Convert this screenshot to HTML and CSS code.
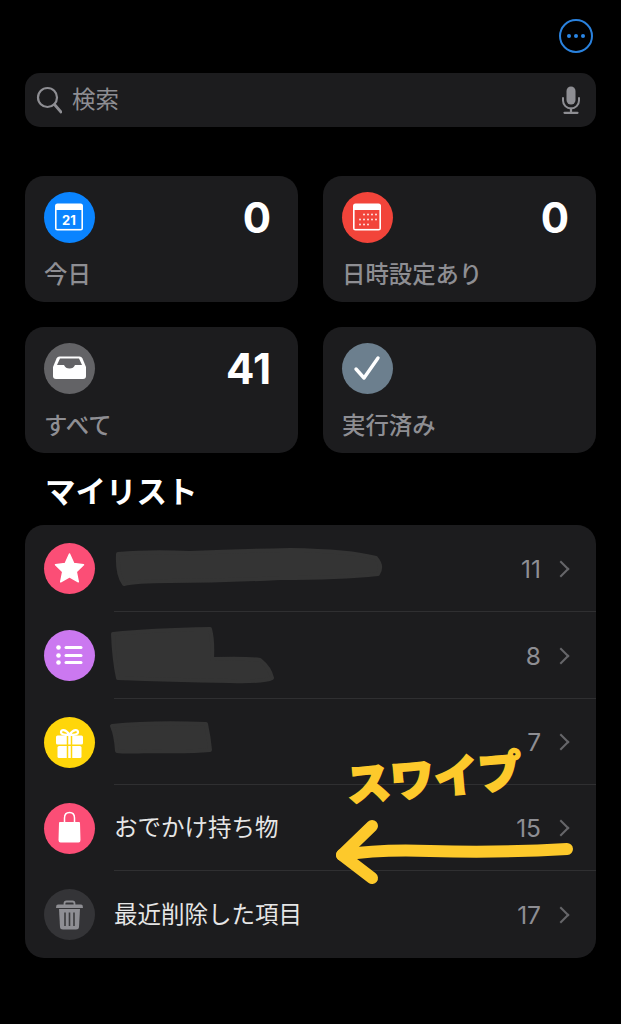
FILE: index.html
```html
<!DOCTYPE html>
<html lang="ja">
<head>
<meta charset="utf-8">
<title>リマインダー</title>
<link rel="stylesheet" href="styles.css">
</head>
<body>
<main class="screen">
  <header class="topbar">
    <button class="more" aria-label="その他"><span class="dot"></span><span class="dot"></span><span class="dot"></span></button>
  </header>

  <div class="search">
    <svg class="search-glass" viewBox="0 0 26 28" width="26" height="28"><circle cx="11.5" cy="11.5" r="9.5" fill="none" stroke="#8e8e93" stroke-width="2.2"/><path d="M18.5 18.5 L25 26" stroke="#8e8e93" stroke-width="2.8" stroke-linecap="round"/></svg>
    <span class="search-text">検索</span>
    <svg class="search-mic" viewBox="0 0 20 28" width="20" height="28"><rect x="5.5" y="0.5" width="9" height="18" rx="4.5" fill="#8e8e93"/><path d="M2 12 v2.5 a8 8 0 0 0 16 0 V12" fill="none" stroke="#8e8e93" stroke-width="2" stroke-linecap="round"/><path d="M10 22.5 V26 M3.5 26.8 H16.5" stroke="#8e8e93" stroke-width="2.2" stroke-linecap="round"/></svg>
  </div>

  <section class="cards">
    <article class="card">
      <div class="card-top">
        <span class="icon blue">
          <svg viewBox="0 0 51 51" width="51" height="51"><rect x="11" y="11.5" width="28" height="27" rx="2.5" fill="#fff"/><rect x="12.6" y="18" width="24.8" height="18.9" fill="#0a84ff"/><text class="cal-num" x="25" y="32.500" text-anchor="middle">21</text></svg>
        </span>
        <span class="card-count">0</span>
      </div>
      <div class="card-label">今日</div>
    </article>
    <article class="card">
      <div class="card-top">
        <span class="icon red">
          <svg viewBox="0 0 51 51" width="51" height="51"><rect x="11" y="11.5" width="28" height="27" rx="2.5" fill="#fff"/><rect x="12.6" y="18" width="24.8" height="18.9" fill="#f2443a"/><g fill="#fff" opacity="0.85"><circle cx="22" cy="22.500" r="1"/><circle cx="26" cy="22.500" r="1"/><circle cx="30" cy="22.500" r="1"/><circle cx="34" cy="22.500" r="1"/><circle cx="18" cy="27.500" r="1"/><circle cx="22" cy="27.500" r="1"/><circle cx="26" cy="27.500" r="1"/><circle cx="30" cy="27.500" r="1"/><circle cx="34" cy="27.500" r="1"/><circle cx="18" cy="32.500" r="1"/><circle cx="22" cy="32.500" r="1"/><circle cx="26" cy="32.500" r="1"/></g></svg>
        </span>
        <span class="card-count">0</span>
      </div>
      <div class="card-label">日時設定あり</div>
    </article>
    <article class="card">
      <div class="card-top">
        <span class="icon grey">
          <svg viewBox="0 0 51 51" width="51" height="51"><path d="M15.500 13.500 H35.500 Q37.500 13.500 38.500 15.500 L42 24 V33 Q42 36 39 36 H12 Q9 36 9 33 V24 L12.500 15.500 Q13.500 13.500 15.500 13.500 Z" fill="#fff"/><path d="M16 15.500 H35 L38 22 H31 Q29.500 25.500 25.500 25.500 Q21.500 25.500 20 22 H13 Z" fill="#636366"/></svg>
        </span>
        <span class="card-count">41</span>
      </div>
      <div class="card-label">すべて</div>
    </article>
    <article class="card">
      <div class="card-top">
        <span class="icon slate">
          <svg viewBox="0 0 51 51" width="51" height="51"><path d="M14 26 L22 35 L36 15" fill="none" stroke="#fff" stroke-width="3.400" stroke-linecap="round" stroke-linejoin="round"/></svg>
        </span>
      </div>
      <div class="card-label">実行済み</div>
    </article>
  </section>

  <h2 class="section-title">マイリスト</h2>

  <section class="list">
    <div class="row">
      <span class="icon pink">
        <svg viewBox="0 0 51 51" width="51" height="51"><path d="M25.500 11 L29.800 20.600 L39.500 21.800 L32.300 28.800 L34.300 38.800 L25.500 33.800 L16.700 38.800 L18.700 28.800 L11.500 21.800 L21.200 20.600 Z" fill="#fff" stroke="#fff" stroke-width="1.500" stroke-linejoin="round"/></svg>
      </span>
      <div class="row-body"><span class="row-name"></span><span class="row-count">11</span><span class="chev"></span></div>
    </div>
    <div class="row">
      <span class="icon purple">
        <svg viewBox="0 0 51 51" width="51" height="51"><g fill="#fff"><circle cx="14.500" cy="17.500" r="2.300"/><circle cx="14.500" cy="25.500" r="2.300"/><circle cx="14.500" cy="32.500" r="2.300"/><rect x="20.500" y="16" width="18" height="3" rx="1.500"/><rect x="20.500" y="24" width="18" height="3" rx="1.500"/><rect x="20.500" y="31" width="18" height="3" rx="1.500"/></g></svg>
      </span>
      <div class="row-body"><span class="row-name"></span><span class="row-count">8</span><span class="chev"></span></div>
    </div>
    <div class="row">
      <span class="icon yellow">
        <svg viewBox="0 0 51 51" width="51" height="51"><g fill="#fff"><rect x="12" y="18.500" width="27" height="9" rx="1.500"/><rect x="13.500" y="29" width="24" height="12" rx="1.500"/></g><path d="M23.500 18 V41 M27.500 18 V41" stroke="#ffd60a" stroke-width="1.500"/><path d="M25.500 18 C22 12 16.500 12 17 15.500 C17.300 18 22 18 25.500 18 C29 18 33.700 18 34 15.500 C34.500 12 29 12 25.500 18 Z" fill="none" stroke="#fff" stroke-width="2.200"/></svg>
      </span>
      <div class="row-body"><span class="row-name"></span><span class="row-count">7</span><span class="chev"></span></div>
    </div>
    <div class="row">
      <span class="icon pink">
        <svg viewBox="0 0 51 51" width="51" height="51"><path d="M16 19 H35 Q36 19 36 20 L36.500 37 Q36.500 39.500 34.500 39.500 H16.500 Q14.500 39.500 14.500 37 L15 20 Q15 19 16 19 Z" fill="#fff"/><path d="M20.500 23 V15 Q20.500 9.500 25.500 9.500 Q30.500 9.500 30.500 15 V23" fill="none" stroke="#fff" stroke-width="1.500"/></svg>
      </span>
      <div class="row-body"><span class="row-name">おでかけ持ち物</span><span class="row-count">15</span><span class="chev"></span></div>
    </div>
    <div class="row">
      <span class="icon dark">
        <svg viewBox="0 0 51 51" width="51" height="51"><path d="M14 16.500 H37 Q38 16.500 38 18 H13 Q13 16.500 14 16.500 Z M20.500 16.500 V14.500 Q20.500 12.500 22.500 12.500 H28.500 Q30.500 12.500 30.500 14.500 V16.500" fill="none" stroke="#8e8e93" stroke-width="1.800"/><path d="M13 17 H38 V18.500 H13 Z" fill="#8e8e93"/><path d="M15 20 H36 L35 38 Q34.800 40.500 32 40.500 H19 Q16.200 40.500 16 38 Z" fill="#8e8e93"/><path d="M21 23.500 V37 M25.500 23.500 V37 M30 23.500 V37" stroke="#3a3a3c" stroke-width="1.600"/></svg>
      </span>
      <div class="row-body row-last"><span class="row-name">最近削除した項目</span><span class="row-count">17</span><span class="chev"></span></div>
    </div>
  </section>

  <svg class="marks" viewBox="0 0 621 1024" width="621" height="1024" aria-hidden="true">
    <g fill="#343434" stroke="#343434" stroke-width="4" stroke-linejoin="round">
      <path d="M118 554 Q150 551 190 553 Q240 551 290 550 Q350 551 376 558 Q383 566 378 574 Q340 578 280 578 Q220 581 170 581 Q135 581 124 584 Q117 575 118 554 Z"/>
      <path d="M113 634 Q150 630 210 629 Q213 640 212 659 Q250 658 260 660 Q270 668 272 678 Q265 682 230 681 Q170 680 118 678 Q114 660 113 634 Z"/>
      <path d="M112 726 Q150 722 206 724 Q209 738 210 750 Q190 752 150 751 Q125 752 117 751 Q116 735 112 726 Z"/>
    </g>
    <g fill="none" stroke="#fdc92b" stroke-linecap="round" stroke-linejoin="round">
      <path d="M567 849 Q500 853 430 851 Q380 849 342 855" stroke-width="12"/>
      <path d="M372 826 L342 855 L372 878" stroke-width="12"/>
    </g>
  </svg>
  <span class="swipe">スワイプ</span>
</main>
</body>
</html>
```
FILE: styles.css
```css
* { box-sizing: border-box; }
html, body { margin: 0; background: #000; }
body {
  font-family: "Inter", "Noto Sans CJK JP", "Liberation Sans", sans-serif;
  color: #fff;
}
.screen {
  position: relative;
  width: 621px;
  height: 1024px;
  padding: 19px 25px 0;
  overflow: hidden;
}
.topbar { display: flex; justify-content: flex-end; height: 34px; padding-right: 3px; }
.more {
  width: 34px; height: 34px; padding: 0;
  display: flex; align-items: center; justify-content: center; gap: 2.500px;
  background: none;
  border: 2.500px solid #2a82de;
  border-radius: 50%;
}
.dot { width: 4.500px; height: 4.500px; border-radius: 50%; background: #2a86e6; }
.search {
  display: flex; align-items: center;
  height: 54px; margin-top: 20px; padding: 0 15px 0 11px;
  background: #1c1c1e; border-radius: 15px;
}
.search-text { margin-left: 10px; flex: 1; font-size: 23.500px; line-height: 30px; color: #8e8e93; }
.search-mic { display: block; }
.cards {
  display: grid; grid-template-columns: 273px 273px; gap: 25px;
  margin-top: 49px;
}
.card {
  height: 126px; padding: 16px 27px 0 19px;
  background: #1c1c1e; border-radius: 19px;
}
.card-top { display: flex; align-items: center; justify-content: space-between; height: 51px; }
.card-count { font-size: 42px; line-height: 51px; font-weight: 700; color: #fff; }
.card-label { margin-top: 17px; font-size: 23.400px; line-height: 30px; font-weight: 500; color: #8e8e93; }
.icon { flex: none; display: block; width: 51px; height: 51px; border-radius: 50%; }
.icon svg { display: block; }
.blue { background: #0a84ff; }
.red { background: #f2443a; }
.grey { background: #636366; }
.slate { background: #6c7f8e; }
.pink { background: #fb4e76; }
.purple { background: #cb78f0; }
.yellow { background: #ffd60a; }
.dark { background: #343437; }
.cal-num { font-size: 13px; font-weight: 700; fill: #fff; font-family: "Inter", sans-serif; }
.section-title {
  height: 72px; margin: 0; padding: 18px 0 0 20px;
  font-size: 30.500px; line-height: 42px; font-weight: 700; color: #fff;
}
.list {
  display: grid; grid-template-rows: 87px 87px 86px 86px 87px;
  height: 433px; background: #1c1c1e; border-radius: 19px; overflow: hidden;
}
.row { display: flex; align-items: center; padding-left: 19px; }
.row-body {
  flex: 1; display: flex; align-items: center; height: 100%;
  margin-left: 19px; padding: 1px 27px 0 0;
  border-bottom: 1px solid #2f2f31;
}
.row-last { border-bottom: none; }
.row-name { flex: 1; font-size: 23.500px; line-height: 30px; color: #e6e6e6; }
.row-count { font-size: 24.500px; line-height: 30px; color: #8e8e93; font-weight: 400; }
.chev {
  width: 12px; height: 12px; margin-left: 14px; margin-right: 2px;
  border-top: 2.800px solid #66666a; border-right: 2.800px solid #66666a;
  transform: rotate(45deg);
}
.marks { position: absolute; left: 0; top: 0; pointer-events: none; }
.swipe {
  position: absolute; left: 346px; top: 745px;
  font-family: "Noto Sans CJK JP", sans-serif;
  font-size: 44px; line-height: 60px; font-weight: 900;
  color: #fdc92b;
  -webkit-text-stroke: 2px #fdc92b;
  white-space: nowrap;
  transform: rotate(-5deg);
}
```
